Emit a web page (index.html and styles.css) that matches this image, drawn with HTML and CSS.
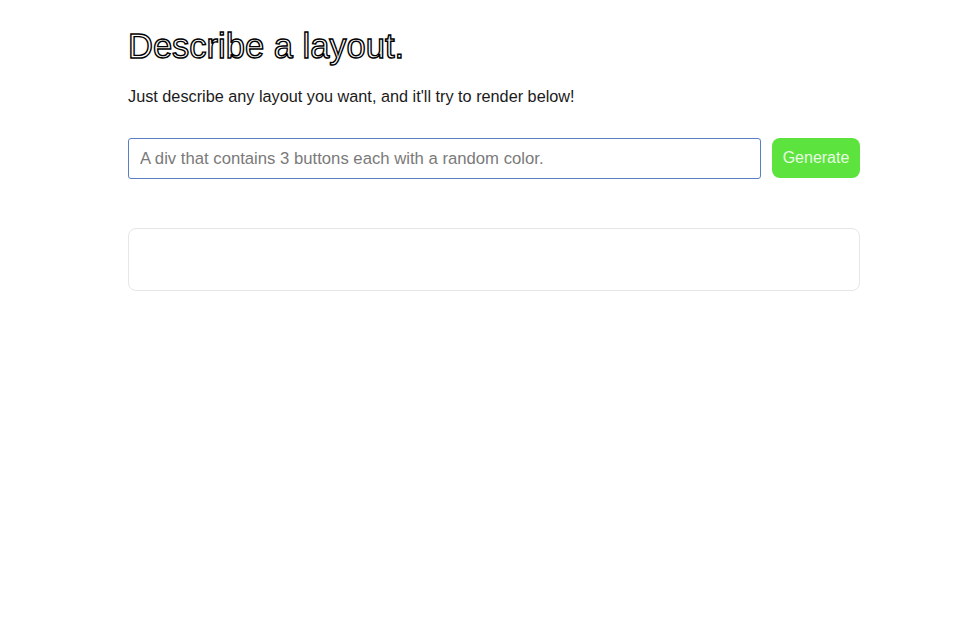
FILE: index.html
```html
<!DOCTYPE html>
<html>
<head>
<meta charset="utf-8">
<link rel="stylesheet" href="styles.css">
</head>
<body>
<main class="page">
  <h1 class="title">Describe a layout.</h1>
  <p class="subtitle">Just describe any layout you want, and it'll try to render below!</p>
  <form class="prompt">
    <input class="prompt-input" type="text" placeholder="A div that contains 3 buttons each with a random color.">
    <button class="generate" type="button">Generate</button>
  </form>
  <div class="preview"></div>
</main>
</body>
</html>
```
FILE: styles.css
```css
html, body {
  margin: 0;
  padding: 0;
  background: #ffffff;
}
body {
  font-family: "Liberation Sans", Arial, sans-serif;
  color: #1a1a1a;
}
.page {
  width: 732px;
  margin: 0 0 0 128px;
  padding-top: 27px;
  display: flex;
  flex-direction: column;
}
.title {
  margin: 0;
  font-size: 34.5px;
  line-height: 38px;
  font-weight: 400;
  color: #ffffff;
  -webkit-text-stroke: 1.4px #000000;
}
.subtitle {
  margin: 21px 0 0;
  font-size: 16.25px;
  line-height: 20px;
  color: #1a1a1a;
}
.prompt {
  margin: 32px 0 0;
  display: flex;
  gap: 11px;
  align-items: flex-start;
}
.prompt-input {
  flex: 1;
  height: 41px;
  box-sizing: border-box;
  border: 1.5px solid #5a7ec4;
  border-radius: 3px;
  padding: 0 11px;
  font-family: "Liberation Sans", Arial, sans-serif;
  font-size: 16.7px;
  color: #333;
  outline: none;
}
.prompt-input::placeholder {
  color: #7a7a7a;
}
.generate {
  width: 88px;
  height: 40px;
  border: none;
  border-radius: 8px;
  background: #5ce33e;
  color: #e8fbe2;
  font-family: "Liberation Sans", Arial, sans-serif;
  font-size: 16px;
  padding: 0;
}
.preview {
  margin-top: 49px;
  height: 63px;
  box-sizing: border-box;
  border: 1.5px solid #e6e6e6;
  border-radius: 8px;
}
```
